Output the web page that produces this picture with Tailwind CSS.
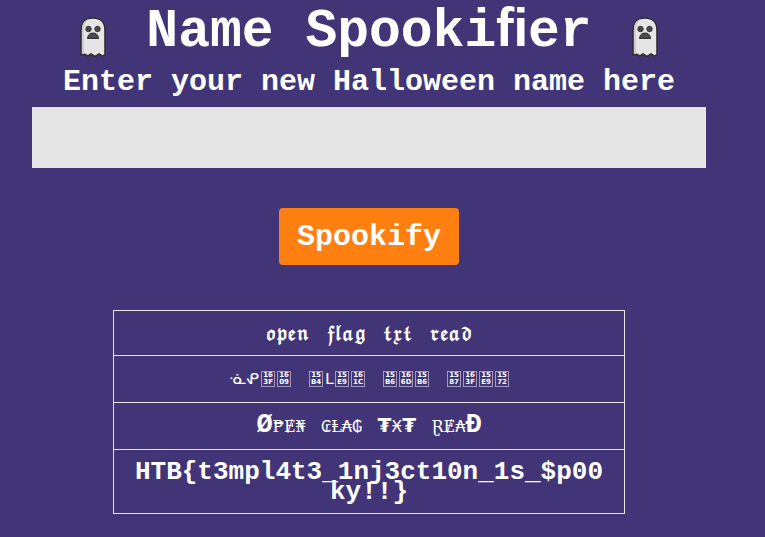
<!DOCTYPE html>
<html lang="en">
<head>
<meta charset="utf-8">
<meta name="viewport" content="width=device-width, initial-scale=1">
<title>Name Spookifier</title>
<script src="https://cdn.jsdelivr.net/npm/@tailwindcss/browser@4"></script>
</head>
<body class="min-h-screen overflow-x-hidden bg-[#423577] pl-8 pr-[59px] pb-5 font-['Liberation_Mono',monospace] font-bold text-white">
<svg class="hidden" aria-hidden="true">
  <symbol id="ghost" viewBox="0 0 26 40">
    <path d="M1 38V13C1 5 6 1 13 1s12 4 12 12v25l-3 1-3-2-3 2h-2l-3-2-3 2-4-2z" fill="#e5e5e5" stroke="#302f32" stroke-width="1.6" stroke-linejoin="round"/>
    <path d="M2 37V13C2 7 5 3 9 2 5 5 4 8 4 13v24z" fill="#cdcdcf"/>
    <circle cx="8.500" cy="12" r="2.700" fill="#4a4a4c" stroke="#303033"/>
    <circle cx="17.500" cy="12" r="2.700" fill="#4a4a4c" stroke="#303033"/>
    <path d="M7.500 21.500c0-3.500 2.500-5.500 5.500-5.500s5.500 2 5.500 5.500z" fill="#4a4a4c" stroke="#303033" stroke-linejoin="round"/>
  </symbol>
</svg>
<main class="flex flex-col items-center">
  <h1 class="flex h-16 items-center gap-10 whitespace-nowrap text-[53px] leading-[64px]">
    <svg class="mt-[10px] h-10 w-[26px]" role="img" aria-label="Ghost"><use href="#ghost"/></svg>
    <span>Name Spooki&#xFB01;er</span>
    <svg class="mt-[10px] h-10 w-[26px]" role="img" aria-label="Ghost"><use href="#ghost"/></svg>
  </h1>
  <form class="flex w-full flex-col items-center" onsubmit="return false">
    <label for="name" class="whitespace-nowrap text-[30px] leading-9">Enter your new Halloween name here</label>
    <input id="name" type="text" class="mt-[7px] h-[61px] w-full bg-[#e5e5e5] px-4 text-2xl text-black outline-none">
    <button type="submit" class="mt-10 h-[57px] rounded bg-[#ff7f11] px-[18px] text-[30px] leading-9">Spookify</button>
  </form>
  <table class="mt-[45px] w-full max-w-[512px] border-collapse text-center">
    <tbody>
      <tr><td class="h-[45px] border border-[#e5e5e5] pt-1 font-['DejaVu_Math_TeX_Gyre','DejaVu_Sans',serif] text-lg leading-5 font-bold whitespace-pre">𝔬𝔭𝔢𝔫   𝔣𝔩𝔞𝔤   𝔱𝔵𝔱   𝔯𝔢𝔞𝔡</td></tr>
      <tr><td class="h-[47px] border border-[#e5e5e5]">
        <div class="flex items-center justify-center gap-[18px] font-['DejaVu_Sans',sans-serif] text-base leading-4 font-normal">
          <span class="flex items-center gap-0.5"><span>ᓍᕵ</span><span class="w-3.5 border border-white/50 text-[7px] leading-[7px] font-bold">16<br>3F</span><span class="w-3.5 border border-white/50 text-[7px] leading-[7px] font-bold">16<br>09</span></span>
          <span class="flex items-center gap-0.5"><span class="w-3.5 border border-white/50 text-[7px] leading-[7px] font-bold">15<br>B4</span><span class="w-2">ᒪ</span><span class="w-3.5 border border-white/50 text-[7px] leading-[7px] font-bold">15<br>E9</span><span class="w-3.5 border border-white/50 text-[7px] leading-[7px] font-bold">16<br>1C</span></span>
          <span class="flex items-center gap-0.5"><span class="w-3.5 border border-white/50 text-[7px] leading-[7px] font-bold">15<br>B6</span><span class="w-3.5 border border-white/50 text-[7px] leading-[7px] font-bold">16<br>6D</span><span class="w-3.5 border border-white/50 text-[7px] leading-[7px] font-bold">15<br>B6</span></span>
          <span class="flex items-center gap-0.5"><span class="w-3.5 border border-white/50 text-[7px] leading-[7px] font-bold">15<br>87</span><span class="w-3.5 border border-white/50 text-[7px] leading-[7px] font-bold">16<br>3F</span><span class="w-3.5 border border-white/50 text-[7px] leading-[7px] font-bold">15<br>E9</span><span class="w-3.5 border border-white/50 text-[7px] leading-[7px] font-bold">15<br>72</span></span>
        </div>
      </td></tr>
      <tr><td class="h-[47px] border border-[#e5e5e5] font-['DejaVu_Serif','DejaVu_Sans',serif] text-base leading-5 font-normal whitespace-pre"><b class="font-['Liberation_Mono',monospace] text-[27px] leading-5">Ø</b>₱Ɇ₦   ₢Ⱡ₳₲   <b class="text-xl leading-5">₮</b>Ӿ<b class="text-xl leading-5">₮</b>   ⱤɆ₳<b class="font-['Liberation_Mono',monospace] text-[27px] leading-5">Đ</b></td></tr>
      <tr><td class="h-16 border border-[#e5e5e5] px-3.5 text-[26px] leading-5 break-all">HTB{t3mpl4t3_1nj3ct10n_1s_$p00ky!!}</td></tr>
    </tbody>
  </table>
</main>
</body>
</html>
